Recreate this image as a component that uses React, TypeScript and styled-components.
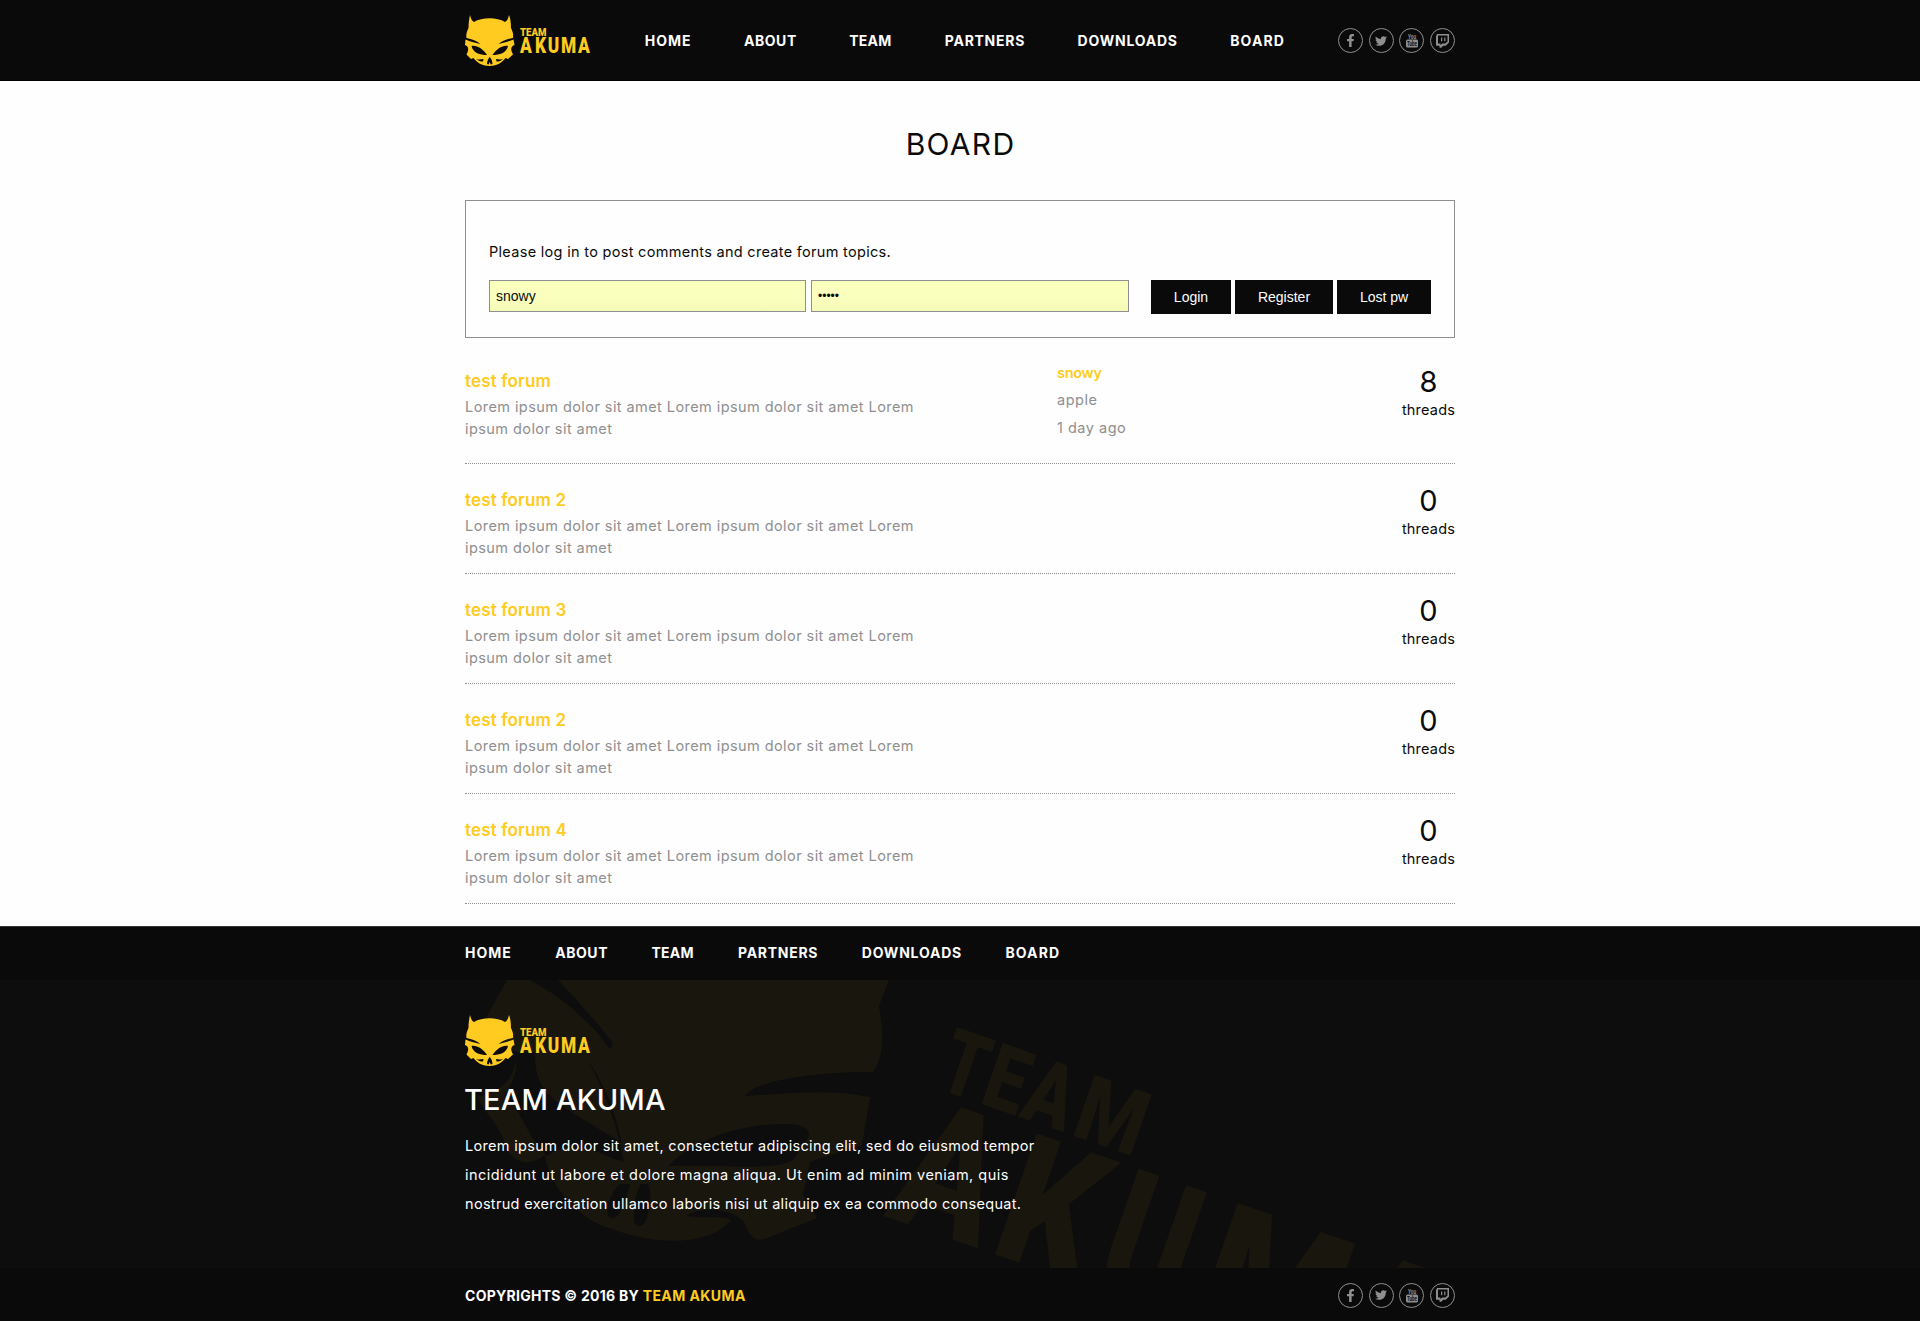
import React from 'react';
import styled, { createGlobalStyle } from 'styled-components';
import { FaFacebookF, FaTwitter } from 'react-icons/fa';

const ink = '#0a0a0a';
const gold = '#ffcb20';
const grey = '#8f8f8f';
const sans = "Inter, 'Open Sans', sans-serif";
const formSans = "'Liberation Sans', Arial, sans-serif";

const GlobalStyle = createGlobalStyle`
  *, *::before, *::after { box-sizing: border-box; }
  body { margin: 0; background: #fefefe; color: ${ink}; font-family: ${sans}; font-size: 14.5px; }
  a { color: inherit; text-decoration: none; }
  h1, h2, h3, p { margin: 0; font-weight: 400; }
`;

const Container = styled.div`
  width: 990px;
  margin: 0 auto;
`;

const Header = styled.header`
  height: 81px;
  background: ${ink};
  border-bottom: 1px solid #000;
`;

const HeaderInner = styled(Container)`
  display: flex;
  justify-content: space-between;
  align-items: center;
  height: 81px;
`;

const Nav = styled.nav<{ $gap: number }>`
  display: flex;
  gap: ${(p) => p.$gap}px;
`;

const NavLink = styled.a<{ $width: number; $tracking: number }>`
  width: ${(p) => p.$width}px;
  color: #fefefe;
  font-size: 14px;
  font-weight: 700;
  line-height: 20px;
  letter-spacing: ${(p) => p.$tracking}px;
  white-space: nowrap;
`;

const SocialList = styled.div`
  display: flex;
  justify-content: space-between;
  width: 117px;
`;

const SocialLink = styled.a`
  display: flex;
  align-items: center;
  justify-content: center;
  width: 25px;
  height: 25px;
  border: 1px solid ${grey};
  border-radius: 50%;
  color: ${grey};
`;

const LogoSvg = styled.svg`
  display: block;
  overflow: visible;
`;

const PageTitle = styled.h1`
  margin: 43px 0 36px;
  padding-left: 1px;
  font-size: 30px;
  line-height: 40px;
  letter-spacing: 1.3px;
  text-align: center;
`;

const LoginBox = styled.section`
  height: 138px;
  padding: 39px 23px 0;
  border: 1px solid ${grey};
`;

const LoginHint = styled.p`
  line-height: 24px;
  letter-spacing: 0.3px;
`;

const LoginForm = styled.form`
  display: flex;
  align-items: flex-start;
  gap: 22px;
  margin-top: 16px;
`;

const Fields = styled.div`
  display: grid;
  grid-template-columns: 317px 318px;
  gap: 5px;
`;

const Field = styled.input<{ $size: number }>`
  min-width: 0;
  height: 32px;
  padding: 0 6px;
  border: 1px solid ${grey};
  border-radius: 0;
  outline: none;
  background: linear-gradient(#faffbd 60%, #f5f9b9);
  color: ${ink};
  font: ${(p) => p.$size}px ${formSans};
`;

const Buttons = styled.div`
  display: flex;
  gap: 4px;
`;

const Button = styled.button<{ $width: number }>`
  width: ${(p) => p.$width}px;
  height: 34px;
  padding: 0;
  border: 0;
  background: ${ink};
  color: #fefefe;
  font: 14px ${formSans};
`;

const ForumList = styled.div`
  margin: 7px 0 22px;
`;

const ForumRow = styled.article`
  display: grid;
  grid-template-columns: 592px 1fr 53px;
  align-items: start;
  padding: 14px 0;
  border-bottom: 1px dotted ${grey};
`;

const ForumInfo = styled.div`
  padding-top: 8px;
`;

const ForumTitle = styled.h3`
  color: ${gold};
  font-size: 17px;
  font-weight: 600;
  line-height: 28px;
  letter-spacing: 0.15px;
`;

const ForumText = styled.p`
  width: 470px;
  padding-top: 1px;
  color: ${grey};
  line-height: 22px;
  letter-spacing: 0.43px;
`;

const LastPost = styled.div`
  display: flex;
  flex-direction: column;
  margin-bottom: 8px;
  color: ${grey};
  line-height: 27.33px;
  letter-spacing: 0.5px;
`;

const Author = styled.a`
  color: ${gold};
  font-weight: 600;
  letter-spacing: -0.3px;
`;

const Threads = styled.div`
  display: flex;
  flex-direction: column;
  align-items: center;
  padding-top: 8px;
  line-height: 24px;
  letter-spacing: 0.2px;
  white-space: nowrap;
`;

const ThreadCount = styled.span`
  padding-bottom: 1px;
  font-size: 29px;
  line-height: 30px;
`;

const Footer = styled.footer`
  background: #0d0d0d;
  color: #fefefe;
`;

const FooterNav = styled.div`
  display: flex;
  align-items: center;
  height: 54px;
  background: ${ink};
  border-top: 1px solid #333;
`;

const FooterMain = styled.div`
  position: relative;
  height: 288px;
  overflow: hidden;
`;

const FooterContent = styled(Container)`
  position: relative;
  padding-top: 35px;
`;

const Watermark = styled.svg`
  position: absolute;
  top: 0;
  left: 50%;
  margin-left: -495px;
  fill: #19160e;
`;

const FooterTitle = styled.h2`
  margin: 14px 0 11px -1px;
  font-size: 29px;
  font-weight: 500;
  line-height: 40px;
  letter-spacing: 0.15px;
`;

const FooterLine = styled.span<{ $tracking: number }>`
  display: block;
  line-height: 29px;
  letter-spacing: ${(p) => p.$tracking}px;
`;

const FooterBottom = styled.div`
  height: 53px;
  background: ${ink};
`;

const FooterBottomInner = styled(Container)`
  display: flex;
  align-items: center;
  justify-content: space-between;
  height: 53px;
  padding-top: 2px;
`;

const Copyright = styled.span`
  font-size: 14px;
  font-weight: 700;
  letter-spacing: 0.27px;
`;

const CopyrightLink = styled.a`
  color: ${gold};
  letter-spacing: 0.42px;
`;

const navItems = [
  { label: 'HOME', width: 45.5, tracking: 0.95 },
  { label: 'ABOUT', width: 51.5, tracking: 0.55 },
  { label: 'TEAM', width: 42, tracking: 0.25 },
  { label: 'PARTNERS', width: 79, tracking: 0.72 },
  { label: 'DOWNLOADS', width: 99, tracking: 0.78 },
  { label: 'BOARD', width: 54, tracking: 1.1 },
];

const forums = [
  { title: 'test forum', threads: 8, last: { author: 'snowy', topic: 'apple', when: '1 day ago' } },
  { title: 'test forum 2', threads: 0 },
  { title: 'test forum 3', threads: 0 },
  { title: 'test forum 2', threads: 0 },
  { title: 'test forum 4', threads: 0 },
];

function Navigation({ gap }: { gap: number }) {
  return (
    <Nav $gap={gap}>
      {navItems.map((item) => (
        <NavLink key={item.label} href="#" $width={item.width} $tracking={item.tracking}>
          {item.label}
        </NavLink>
      ))}
    </Nav>
  );
}

function Logo() {
  return (
    <LogoSvg width="126" height="51" viewBox="0 0 126 51">
      <path
        fill={gold}
        d="M5 0 C6 4 7 6 9 7 C17 2 32 2 40 7 C42 6 43 4 44 0 C46 5 46 11 46 13 C48 17 48.500 20 48 23 C42 24 37 26 33.500 29 C39 28 45 26 48.500 24.500 L49.500 30 C46 31 46 34 46.500 36 L48 39.500 L43 44 L40.500 43 C37 48 31 51 24.500 51 C18 51 12 48 8.500 43 L6 44 L1.500 39.500 L3 36 C3.500 33 3 31 0 30 L0.500 24.500 C4 26 10 28 15.500 29 C12 26 7 24 1.500 23 C1 20 1.500 17 3.500 13 C3.500 9 4 4 5 0 Z"
      />
      <g fill={ink}>
        <path d="M6.500 31 C12 30 18 34 22 40 C15 40 8 38 6.500 31 Z" />
        <path d="M43 31 C37.500 30 31.500 34 27.500 40 C34.500 40 41.500 38 43 31 Z" />
        <path d="M24.700 42 C23 44 22 46.500 22 49 L23.700 49.500 L24.700 47 L25.700 49.500 L27.500 49 C27.500 46.500 26.500 44 24.700 42 Z" />
        <path d="M11 43.500 C14 45.500 16 44 18.500 44 L18 46.500 C16.500 46 15 47.500 11 43.500 Z" />
        <path d="M38.500 43.500 C35.500 45.500 33.500 44 31 44 L31.500 46.500 C33 46 34.500 47.500 38.500 43.500 Z" />
      </g>
      <g fill={gold} fontFamily="Roboto, sans-serif" fontWeight="900">
        <text x="55" y="20.700" fontSize="11.500" textLength="26.500" lengthAdjust="spacingAndGlyphs">TEAM</text>
        <text transform="scale(0.77 1)" x="71.400 91 107.500 124.600 146.800" y="38" fontSize="22.500">AKUMA</text>
      </g>
    </LogoSvg>
  );
}

function YouTubeIcon() {
  return (
    <svg width="12" height="15" viewBox="0 0 12 15" fill="currentColor" fontFamily="Roboto, sans-serif" fontWeight="700">
      <text x="2" y="5.500" fontSize="7" textLength="8" lengthAdjust="spacingAndGlyphs">You</text>
      <rect x="0" y="6.500" width="12" height="8" rx="1.500" />
      <text x="1" y="13" fontSize="7" textLength="10" lengthAdjust="spacingAndGlyphs" fill={ink}>Tube</text>
    </svg>
  );
}

function TwitchIcon() {
  return (
    <svg width="13" height="14" viewBox="0 0 13 14" fill="currentColor" fillRule="evenodd">
      <path d="M1 0 H13 V8.500 L9.700 11.700 H7.200 L5.200 13.700 H3.500 V11.700 H0 V2.400 Z M2 1.400 V9.500 H4.500 V11.200 L6.200 9.500 H9.300 L11.500 7.500 V1.400 Z M5 3.500 H6.200 V7.200 H5 Z M8.200 3.500 H9.400 V7.200 H8.200 Z" />
    </svg>
  );
}

function Social() {
  return (
    <SocialList>
      <SocialLink href="#"><FaFacebookF size={13} /></SocialLink>
      <SocialLink href="#"><FaTwitter size={12} /></SocialLink>
      <SocialLink href="#"><YouTubeIcon /></SocialLink>
      <SocialLink href="#"><TwitchIcon /></SocialLink>
    </SocialList>
  );
}

function WatermarkArt() {
  const small = [
    { c: 'T', x: -7, w: 44 },
    { c: 'E', x: 39, w: 41 },
    { c: 'A', x: 81, w: 49 },
    { c: 'M', x: 136, w: 69 },
  ];
  const large = [
    { c: 'A', x: -4, w: 100 },
    { c: 'K', x: 106, w: 96 },
    { c: 'U', x: 215, w: 86 },
    { c: 'M', x: 318, w: 142 },
    { c: 'A', x: 462, w: 104 },
  ];
  return (
    <Watermark width="1200" height="288" viewBox="0 0 1200 288">
      <path d="M42 0 L23 34 C20 50 32 66 50 72 C53 92 42 110 13 117 C17 132 34 140 43 172 C54 186 68 184 80 175 C84 205 112 240 150 250 C195 267 248 264 266 240 C260 235 240 239 222 236 C232 226 268 228 279 242 C286 256 288 262 300 259 L352 238 L338 215 L345 182 C368 174 388 168 397 165 L405 117 C360 108 320 114 280 116 C290 98 370 91 408 92 C420 76 418 50 414 26 L424 0 Z" />
      <g fill="#0d0d0d">
        <path d="M65 0 C98 18 126 42 144 68 Q148 70 147 62 C132 42 112 20 93 0 Z" />
        <path d="M50 72 H70 C70 104 78 115 116 138 L157 163 C148 122 136 100 124 82 C148 130 152 150 159 182 C136 176 110 154 82 176 C62 156 58 134 40 114 C50 100 53 88 50 72 Z" />
        <path d="M203 186 C236 154 284 144 320 144 C336 144 344 148 344 154 C342 162 334 168 330 178 C316 192 262 184 203 186 Z" />
        <path d="M155 204 C145 214 141 226 143 236 Q149 242 155 232 C160 222 163 212 165 204 Z" />
        <path d="M176 204 C168 218 168 236 170 244 Q176 250 181 240 C186 226 187 212 183 204 Z" />
      </g>
      <g fontFamily="Roboto, sans-serif" fontWeight="900">
        <g transform="translate(476 110) rotate(19.1)" fontSize="91">
          {small.map((l, i) => (
            <text key={i} x={l.x} y="0" textLength={l.w} lengthAdjust="spacingAndGlyphs">{l.c}</text>
          ))}
        </g>
        <g transform="translate(422 237) rotate(19.1)" fontSize="180">
          {large.map((l, i) => (
            <text key={i} x={l.x} y="0" textLength={l.w} lengthAdjust="spacingAndGlyphs">{l.c}</text>
          ))}
        </g>
      </g>
    </Watermark>
  );
}

export default function App() {
  return (
    <>
      <GlobalStyle />
      <Header>
        <HeaderInner>
          <Logo />
          <Navigation gap={53.7} />
          <Social />
        </HeaderInner>
      </Header>
      <Container as="main">
        <PageTitle>BOARD</PageTitle>
        <LoginBox>
          <LoginHint>Please log in to post comments and create forum topics.</LoginHint>
          <LoginForm>
            <Fields>
              <Field type="text" defaultValue="snowy" $size={14} />
              <Field type="password" defaultValue="snowy" $size={12} />
            </Fields>
            <Buttons>
              <Button type="button" $width={80}>Login</Button>
              <Button type="button" $width={98}>Register</Button>
              <Button type="button" $width={94}>Lost pw</Button>
            </Buttons>
          </LoginForm>
        </LoginBox>
        <ForumList>
          {forums.map((forum, i) => (
            <ForumRow key={i}>
              <ForumInfo>
                <ForumTitle>{forum.title}</ForumTitle>
                <ForumText>Lorem ipsum dolor sit amet Lorem ipsum dolor sit amet Lorem ipsum dolor sit amet</ForumText>
              </ForumInfo>
              <LastPost>
                {forum.last && (
                  <>
                    <Author href="#">{forum.last.author}</Author>
                    <span>{forum.last.topic}</span>
                    <span>{forum.last.when}</span>
                  </>
                )}
              </LastPost>
              <Threads>
                <ThreadCount>{forum.threads}</ThreadCount>
                threads
              </Threads>
            </ForumRow>
          ))}
        </ForumList>
      </Container>
      <Footer>
        <FooterNav>
          <Container>
            <Navigation gap={44.7} />
          </Container>
        </FooterNav>
        <FooterMain>
          <WatermarkArt />
          <FooterContent>
            <Logo />
            <FooterTitle>TEAM AKUMA</FooterTitle>
            <p>
              <FooterLine $tracking={0.32}>Lorem ipsum dolor sit amet, consectetur adipiscing elit, sed do eiusmod tempor</FooterLine>
              <FooterLine $tracking={0.47}>incididunt ut labore et dolore magna aliqua. Ut enim ad minim veniam, quis</FooterLine>
              <FooterLine $tracking={0.32}>nostrud exercitation ullamco laboris nisi ut aliquip ex ea commodo consequat.</FooterLine>
            </p>
          </FooterContent>
        </FooterMain>
        <FooterBottom>
          <FooterBottomInner>
            <Copyright>
              COPYRIGHTS © 2016 BY <CopyrightLink href="#">TEAM AKUMA</CopyrightLink>
            </Copyright>
            <Social />
          </FooterBottomInner>
        </FooterBottom>
      </Footer>
    </>
  );
}
